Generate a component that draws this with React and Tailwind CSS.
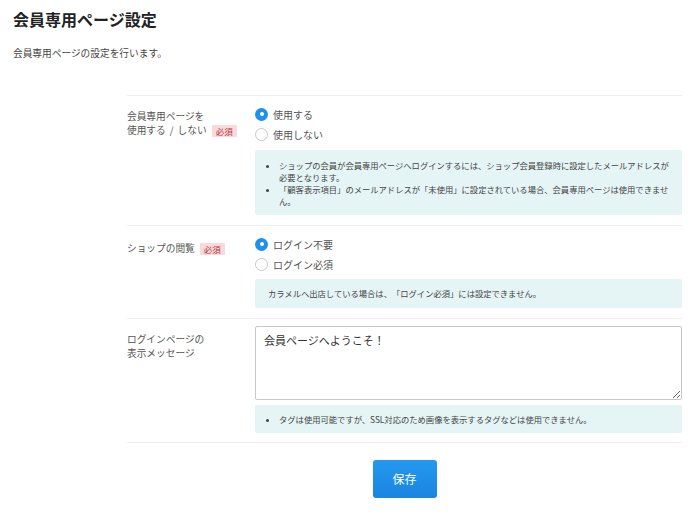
import { useState } from 'react';

function Radio({ checked, label, onClick }) {
  return (
    <label onClick={onClick} className="flex h-[20px] items-center gap-[5px] cursor-pointer">
      {checked ? (
        <span className="flex h-[13px] w-[13px] items-center justify-center rounded-full bg-[#2090ea]">
          <span className="h-[4px] w-[4px] rounded-full bg-white" />
        </span>
      ) : (
        <span className="h-[13px] w-[13px] rounded-full border border-[#c8c8c8] bg-white" />
      )}
      <span className="text-[10px] text-[#555]">{label}</span>
    </label>
  );
}

function Badge() {
  return (
    <span className="ml-[5px] inline-block rounded-[1px] bg-[#fbd9db] px-[4px] text-[8.5px] leading-[12px] text-[#b03a3a] align-middle">
      必須
    </span>
  );
}

export default function App() {
  const [useMember, setUseMember] = useState('use');
  const [browse, setBrowse] = useState('free');
  const [message, setMessage] = useState('会員ページへようこそ！');

  return (
    <div className="min-h-[520px] bg-white px-[13px] pt-[10px] font-['Noto_Sans_CJK_JP','Noto_Sans',sans-serif] text-[#444] [text-spacing-trim:space-all]">
      <h1 className="text-[16px] font-bold leading-[18px] text-[#222]">会員専用ページ設定</h1>
      <p className="mt-[18px] text-[9.7px] leading-[14px] text-[#444]">会員専用ページの設定を行います。</p>

      <div className="ml-[114px] mt-[35px] w-[555px]">
        <div className="border-y border-[#efefef] divide-y divide-[#efefef]">
          {/* 会員専用ページ */}
          <div className="flex pt-[8px] pb-[10px]">
            <div className="mt-[5px] w-[128px] text-[9.7px] leading-[14px] text-[#555]">
              会員専用ページを<br />使用する<span className="mx-[4px]">/</span>しない<Badge />
            </div>
            <div className="flex-1">
              <Radio checked={useMember === 'use'} label="使用する" onClick={() => setUseMember('use')} />
              <Radio checked={useMember === 'none'} label="使用しない" onClick={() => setUseMember('none')} />
              <div className="mt-[6px] h-[65px] rounded-[2px] bg-[#e5f4f5] pt-[9px] pl-[24px] pr-[9px] text-[8.3px] leading-[12px] text-[#444]">
                <ul className="list-disc">
                  <li>ショップの会員が会員専用ページへログインするには、ショップ会員登録時に設定したメールアドレスが必要となります。</li>
                  <li>「顧客表示項目」のメールアドレスが「未使用」に設定されている場合、会員専用ページは使用できません。</li>
                </ul>
              </div>
            </div>
          </div>

          {/* ショップの閲覧 */}
          <div className="flex pt-[8px] pb-[10px]">
            <div className="mt-[7px] w-[128px] text-[9.7px] leading-[14px] text-[#555]">
              ショップの閲覧<Badge />
            </div>
            <div className="flex-1">
              <Radio checked={browse === 'free'} label="ログイン不要" onClick={() => setBrowse('free')} />
              <Radio checked={browse === 'login'} label="ログイン必須" onClick={() => setBrowse('login')} />
              <div className="mt-[5px] flex h-[29px] items-center rounded-[2px] bg-[#e5f4f5] pl-[13px] text-[8.3px] text-[#444]">
                カラメルへ出店している場合は、「ログイン必須」には設定できません。
              </div>
            </div>
          </div>

          {/* ログインページ */}
          <div className="flex pt-[7px] pb-[9px]">
            <div className="mt-[6px] w-[128px] text-[9.7px] leading-[14px] text-[#555]">
              ログインページの<br />表示メッセージ
            </div>
            <div className="flex-1">
              <textarea
                value={message}
                onChange={e => setMessage(e.target.value)}
                className="block h-[74px] w-full rounded-[2px] border border-[#c8c8c8] px-[8px] py-[5px] text-[11px] leading-[16px] text-[#333] outline-none"
              />
              <div className="mt-[5px] h-[28px] rounded-[2px] bg-[#e5f4f5] pt-[8px] pl-[24px] text-[8.3px] leading-[12px] text-[#444]">
                <ul className="list-disc">
                  <li>タグは使用可能ですが、SSL対応のため画像を表示するタグなどは使用できません。</li>
                </ul>
              </div>
            </div>
          </div>
        </div>

        <div className="mt-[17px] flex justify-center">
          <button className="h-[38px] w-[64px] rounded-[3px] bg-gradient-to-b from-[#2499f0] to-[#1a84e0] text-[12px] text-white">
            保存
          </button>
        </div>
      </div>
    </div>
  );
}
